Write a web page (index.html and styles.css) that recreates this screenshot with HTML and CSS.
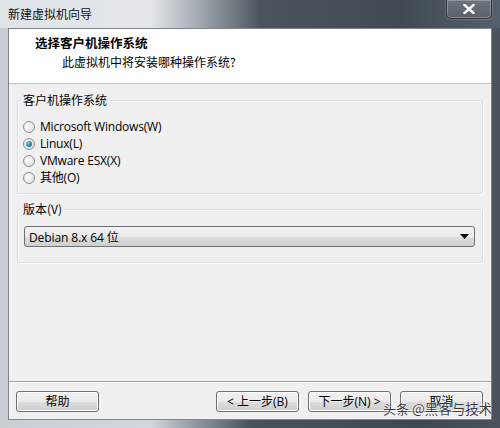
FILE: index.html
```html
<!DOCTYPE html>
<html lang="zh-CN">
<head>
<meta charset="utf-8">
<title>新建虚拟机向导</title>
<link rel="stylesheet" href="styles.css">
</head>
<body>
<div class="window">
  <div class="titlebar">
    <span class="title">新建虚拟机向导</span>
    <button class="close" type="button">
      <svg width="12" height="10" viewBox="0 0 12 10"><path d="M1.5 1 L10.5 9 M10.5 1 L1.5 9" stroke="#fff" stroke-width="2.4" stroke-linecap="square"/></svg>
    </button>
  </div>
  <div class="client">
    <div class="header">
      <div class="h-title">选择客户机操作系统</div>
      <div class="h-sub">此虚拟机中将安装哪种操作系统?</div>
    </div>
    <div class="body">
      <fieldset class="group group-os">
        <legend>客户机操作系统</legend>
        <label class="radio"><span class="dot"></span>Microsoft Windows(W)</label>
        <label class="radio"><span class="dot checked"></span>Linux(L)</label>
        <label class="radio"><span class="dot"></span>VMware ESX(X)</label>
        <label class="radio"><span class="dot"></span>其他(O)</label>
      </fieldset>
      <fieldset class="group group-ver">
        <legend>版本(V)</legend>
        <div class="combo">
          <span class="combo-text">Debian 8.x 64 位</span>
          <svg class="arrow" width="9" height="5" viewBox="0 0 9 5"><path d="M0 0 H9 L4.5 5 Z" fill="#000"/></svg>
        </div>
      </fieldset>
    </div>
    <div class="footer">
      <button class="btn" type="button">帮助</button>
      <button class="btn btn-back" type="button">&lt; 上一步(B)</button>
      <button class="btn" type="button">下一步(N) &gt;</button>
      <button class="btn" type="button">取消</button>
    </div>
  </div>
  <div class="watermark"><span class="wm-a">头条</span> @黑客与技术</div>
</div>
</body>
</html>
```
FILE: styles.css
```css
* { box-sizing: border-box; }
html, body { margin: 0; padding: 0; }
body {
  width: 500px;
  height: 428px;
  overflow: hidden;
  font-family: "Open Sans", "Noto Sans CJK SC", sans-serif;
  font-size: 12px;
  color: #000;
}
.window {
  position: relative;
  width: 500px;
  height: 428px;
  overflow: hidden;
  padding: 0 8px 8px 8px;
  display: flex;
  flex-direction: column;
  background: linear-gradient(to right, #c9ced4 0px, #d3d8dd 150px, #8a929a 200px, #4a535c 250px, #3f4851 420px, #4b545d 500px);
}
.titlebar {
  height: 28px;
  display: flex;
  align-items: flex-start;
  background: linear-gradient(to right, #dfe4e9 0px, #e3e7eb 150px, #a7aeb5 195px, #4c555e 260px, #414a53 400px, #56606a 500px);
  margin: 0 -8px;
  padding: 0 8px 0 8px;
}
.title {
  line-height: 16px;
  margin-top: 6px;
  font-family: "Noto Sans CJK SC", sans-serif;
  color: #111;
}
.close {
  margin-left: auto;
  width: 46px;
  height: 19px;
  padding: 0;
  border: 1px solid #2c333a;
  border-top: none;
  border-radius: 0 0 5px 5px;
  background: linear-gradient(#6d767e, #575f67);
  box-shadow: inset 0 0 0 1px rgba(255,255,255,0.25), 0 0 0 1px rgba(255,255,255,0.15);
  display: flex;
  align-items: center;
  justify-content: center;
}
.client {
  flex: 1;
  display: flex;
  flex-direction: column;
  background: #f0f0f0;
  border: 1px solid #7d858d;
}
.header {
  height: 55px;
  background: #fff;
  border-bottom: 1px solid #c4c4c4;
  padding: 6px 0 0 26px;
}
.h-title {
  font-family: "Noto Sans CJK SC", sans-serif;
  font-weight: bold;
  line-height: 16px;
  font-size: 12.5px;
}
.h-sub {
  font-family: "Noto Sans CJK SC", sans-serif;
  line-height: 16px;
  margin-top: 3px;
  margin-left: 27px;
}
.body {
  flex: 1;
  padding: 8px 8px 0 8px;
  display: flex;
  flex-direction: column;
  gap: 7px;
}
.group {
  margin: 0;
  border: 1px solid #d5dfe5;
  box-shadow: inset 1px 1px 0 #fff, 1px 1px 0 #fff;
  border-radius: 2px;
  min-width: 0;
}
.group legend {
  padding: 0 2px;
  line-height: 16px;
  font-family: "Noto Sans CJK SC", sans-serif;
  background: #f0f0f0;
}
.group-os {
  padding: 10px 8px 7px 5px;
}
.group-os legend { margin-left: -2px; }
.radio {
  display: flex;
  align-items: center;
  height: 17px;
  line-height: 17px;
  letter-spacing: -0.2px;
}
.dot {
  width: 12px;
  height: 12px;
  border-radius: 50%;
  border: 1px solid #8e8f8f;
  background: radial-gradient(circle at 40% 40%, #fdfdfd 0%, #e9e9e9 55%, #cfcfcf 100%);
  margin-right: 5px;
  position: relative;
  flex: none;
}
.dot.checked::after {
  content: "";
  position: absolute;
  left: 2px;
  top: 2px;
  width: 6px;
  height: 6px;
  border-radius: 50%;
  background: radial-gradient(circle at 35% 35%, #8ad0ee 0%, #2f7cae 55%, #1c4f78 100%);
}
.group-ver {
  padding: 9px 7px 15px 6px;
}
.group-ver legend { margin-left: -3px; }
.combo {
  height: 21px;
  border: 1px solid #707070;
  border-radius: 3px;
  background: linear-gradient(#f2f2f2 0%, #ebebeb 50%, #dddddd 51%, #cfcfcf 100%);
  display: flex;
  align-items: center;
  padding: 0 5px 0 4px;
  letter-spacing: -0.1px;
}
.combo-text { flex: 1; }
.arrow { flex: none; }
.footer {
  height: 38px;
  border-top: 1px solid #a0a0a0;
  box-shadow: inset 0 1px 0 #fff;
  display: flex;
  align-items: flex-start;
  padding: 9px 8px 0 7px;
  gap: 9px;
}
.btn {
  width: 83px;
  height: 21px;
  padding: 0;
  border: 1px solid #707070;
  border-radius: 3px;
  background: linear-gradient(#f2f2f2 0%, #ebebeb 50%, #dddddd 51%, #cfcfcf 100%);
  box-shadow: inset 0 0 0 1px #fcfcfc;
  font-family: "Open Sans", "Noto Sans CJK SC", sans-serif;
  font-size: 12px;
  color: #000;
  line-height: 17px;
}
.btn-back { margin-left: auto; }
.watermark {
  position: absolute;
  left: 383px;
  top: 398px;
  font-family: "Noto Sans CJK SC", sans-serif;
  font-size: 13.5px;
  line-height: 20px;
  color: rgba(30,30,30,0.9);
  text-shadow: 0 0 2px #fff, 0 0 1px #fff;
  white-space: nowrap;
}
.wm-a { font-size: 13px; }
```
